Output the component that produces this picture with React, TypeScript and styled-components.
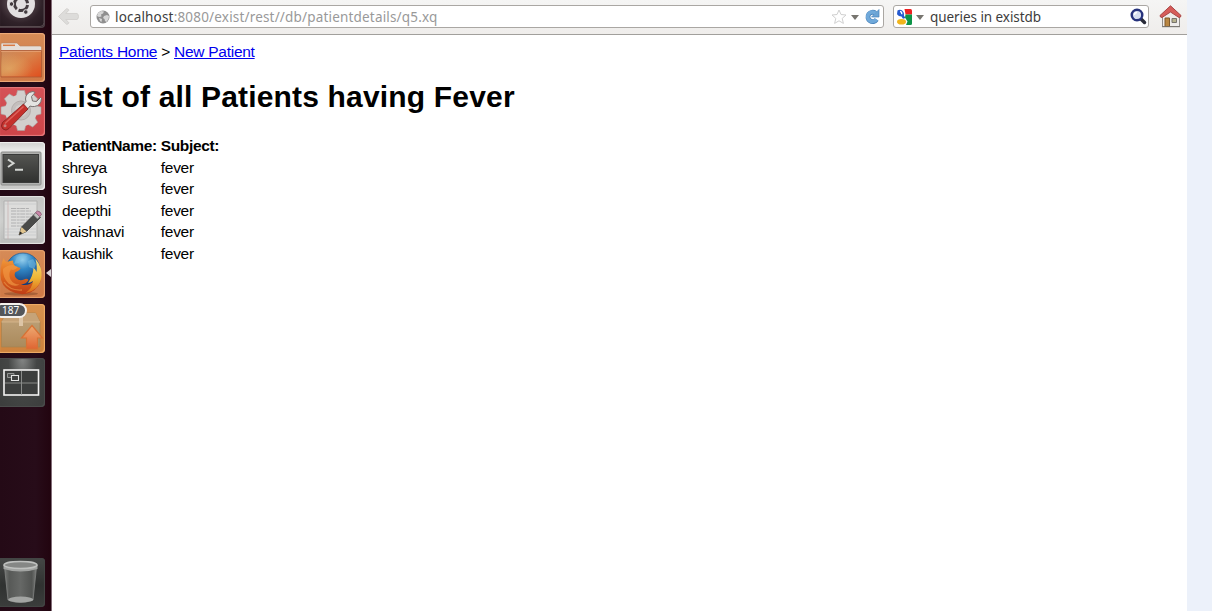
import React from "react";
import styled, { createGlobalStyle } from "styled-components";

const GlobalStyle = createGlobalStyle`
  * { box-sizing: border-box; }
  body { margin: 0; background: #fff; overflow: hidden; }
`;

const Desktop = styled.div`
  display: flex;
  width: 1212px;
  height: 611px;
  overflow: hidden;
  background: #ecf1fa;
  font-family: "Liberation Sans", Arial, sans-serif;
`;

const Launcher = styled.nav`
  display: flex;
  flex-direction: column;
  justify-content: space-between;
  width: 52px;
  height: 611px;
  padding-bottom: 4.5px;
  background: linear-gradient(90deg, #240a16, #270c19 70%, #22040f);
  border-right: 1px solid #826d78;
`;

const TileStack = styled.div`
  display: flex;
  flex-direction: column;
  gap: 5.7px;
  margin-top: -21px;
`;

const Tile = styled.div<{ $fill: string; $edge: string }>`
  position: relative;
  flex: none;
  width: 45px;
  height: 48.5px;
  background: ${(p) => p.$fill};
  border-radius: 0 4px 4px 0;
  box-shadow: inset -1px -1px 1px ${(p) => p.$edge}, inset 0 1px 1px ${(p) => p.$edge};

  > svg { display: block; width: 45px; height: 48.5px; }
`;

const ActiveMark = styled.i`
  position: absolute;
  right: -6px;
  top: 19px;
  border: solid transparent;
  border-width: 4.5px 5px 4.5px 0;
  border-right-color: #d9d2d5;
`;

const Badge = styled.span`
  position: absolute;
  left: -6px;
  top: -1px;
  width: 33px;
  height: 15px;
  padding-left: 6px;
  border: 2px solid #f4f1ed;
  border-radius: 8px;
  background: #53565a;
  color: #fff;
  font: 10px/11px "Noto Sans", sans-serif;
`;

const Browser = styled.main`
  display: flex;
  flex-direction: column;
  width: 1135px;
  background: #fff;
`;

const Toolbar = styled.header`
  display: flex;
  align-items: flex-start;
  height: 35px;
  padding: 5px 0 0 5px;
  background: linear-gradient(#f5f5f4, #efedeb);
  border-bottom: 1px solid #a19f9c;

  svg { display: block; flex: none; }
`;

const BackButton = styled.div`
  width: 33px;
  padding-top: 2px;
`;

const Field = styled.div<{ $width: number; $pad: string; $gap?: number }>`
  display: flex;
  align-items: center;
  width: ${(p) => p.$width}px;
  height: 23px;
  margin-left: ${(p) => p.$gap ?? 0}px;
  padding: ${(p) => p.$pad};
  background: #fff;
  border: 1px solid #aaa7a3;
  border-radius: 3px;
`;

const FieldText = styled.span<{ $spacing: number; $inset?: number }>`
  flex: 1;
  margin-left: ${(p) => p.$inset ?? 0}px;
  font: 13.5px/20px "Noto Sans", "Open Sans", sans-serif;
  letter-spacing: ${(p) => p.$spacing}px;
  color: #3c3c3c;
  white-space: nowrap;
`;

const Path = styled.span`
  color: #999;
`;

const Caret = styled.i<{ $gap: string }>`
  margin: ${(p) => p.$gap};
  border: solid transparent;
  border-width: 5px 4px 0;
  border-top-color: #77756f;
`;

const HomeButton = styled.div`
  margin-left: 10px;
`;

const Page = styled.article`
  padding: 8px 7px;
  font-size: 15.5px;
  letter-spacing: -0.27px;
  color: #000;
`;

const Crumbs = styled.div`
  line-height: 17px;
  height: 17px;
`;

const Link = styled.a`
  color: #0000ee;
  text-decoration: underline;
`;

const Title = styled.h1`
  margin: 20px 0;
  font-size: 30px;
  line-height: 34px;
  letter-spacing: 0.17px;
  white-space: nowrap;
`;

const Table = styled.table`
  border-spacing: 2px;
  font-size: 15.5px;
  line-height: 17.5px;

  th, td { padding: 1px; text-align: left; white-space: nowrap; }
  th { letter-spacing: -0.36px; }
`;

const patients = ["shreya", "suresh", "deepthi", "vaishnavi", "kaushik"];

const DashIcon = () => (
  <svg viewBox="0 0 45 48.5">
    <rect x="-4" y="0" width="48" height="47.5" rx="4" fill="none" stroke="#57494e" strokeWidth="1" />
    <circle cx="21" cy="25" r="14" fill="#e2dfe0" />
    <circle cx="21" cy="25" r="6.6" fill="none" stroke="#433b3f" strokeWidth="3" strokeDasharray="11.8 2" strokeDashoffset="-1" />
    <circle cx="11.5" cy="25" r="2.3" fill="#433b3f" stroke="#e2dfe0" />
    <circle cx="25.8" cy="33" r="2.3" fill="#433b3f" stroke="#e2dfe0" />
    <circle cx="25.8" cy="17" r="2.3" fill="#433b3f" stroke="#e2dfe0" />
  </svg>
);

const FolderIcon = () => (
  <svg viewBox="0 0 45 48.5">
    <defs>
      <linearGradient id="folder" x1="0" y1="0" x2="1" y2="1">
        <stop offset="0" stopColor="#cb8b5c" /><stop offset=".45" stopColor="#d9824a" /><stop offset="1" stopColor="#e04e1d" />
      </linearGradient>
      <radialGradient id="folderGlow" cx=".2" cy=".7" r=".6">
        <stop offset="0" stopColor="#e2b56d" stopOpacity=".6" /><stop offset="1" stopColor="#e2b56d" stopOpacity="0" />
      </radialGradient>
    </defs>
    <path d="M1 17V11q0-1 1-1h15l3 3h20q1.500 0 1.500 1.500V18H1z" fill="#e5ded8" stroke="#bb815a" strokeWidth=".6" />
    <path d="M3 12.300h12" fill="none" stroke="#d97943" strokeWidth="1.500" />
    <path d="M1 17.500h40.500V44H1z" fill="url(#folder)" stroke="#ad5933" strokeWidth=".8" />
    <path d="M1 18h40v25H1z" fill="url(#folderGlow)" />
    <path d="M1 18.500h40" stroke="#e9a77b" strokeWidth=".7" />
  </svg>
);

const SettingsIcon = () => {
  const teeth = [0, 45, 90, 135, 180, 225, 270, 315];
  return (
    <svg viewBox="0 0 45 48.5">
      <g transform="translate(21 23.500)">
        {teeth.map((angle) => (
          <path key={angle} d="M-5-14L-3.500-20H3.500L5-14z" fill="#d2cfcd" stroke="#aaa19f" strokeWidth=".6" transform={`rotate(${angle})`} />
        ))}
        <circle r="16" fill="#d2cfcd" />
        <circle r="9.500" fill="#c4bfbd" stroke="#b5aeac" />
        <circle r="6" fill="#d2cdcb" />
      </g>
      <path d="M25.500 12q0-6.500 7.500-7.500l2 1-3.500 4 1 4.500 4 .5 4-4 1 1q-.5 7-7 8-2.500.4-4.500-.5L26 24l-4-5 4-4.500z" fill="#e4e4e2" stroke="#777271" strokeWidth="1" />
      <path d="M23.500 17L2.500 35.500q-2.500 4 .5 6.500 3 2.500 6-.5L28 22z" fill="#c5302c" stroke="#801f1e" strokeWidth=".8" />
      <path d="M23.500 19.500L5 36.500" stroke="#dc625b" strokeWidth="1.500" />
      <circle cx="5" cy="38.700" r="1.500" fill="#c9817c" />
    </svg>
  );
};

const TerminalIcon = () => (
  <svg viewBox="0 0 45 48.5">
    <defs>
      <linearGradient id="screen" x1="0" y1="0" x2="0" y2="1">
        <stop offset="0" stopColor="#545552" /><stop offset="1" stopColor="#30312f" />
      </linearGradient>
    </defs>
    <rect x="1" y="10" width="40" height="33" rx="1" fill="#b0b1af" stroke="#8b8c8a" />
    <rect x="3" y="12.500" width="35.500" height="28" fill="url(#screen)" stroke="#3a3b3a" />
    <path d="M8 17.500l5.500 3.700L8 25M15 27.800h8" fill="none" stroke="#d4d6d3" strokeWidth="2" />
  </svg>
);

const EditorIcon = () => (
  <svg viewBox="0 0 45 48.5">
    <path d="M4 5h33v38H4z" fill="#dddddc" stroke="#b1b1b0" />
    <path d="M8 5v38" stroke="#c4acac" strokeWidth=".7" />
    <path d="M5 8h31M5 33h31M5 36h31M5 39h31" stroke="#bfc2c8" strokeWidth=".6" />
    <path d="M11 12.500h18M11 15h20M11 18h22M11 21h20M11 24h18M11 27h14M11 30h11" stroke="#b0b0b1" strokeWidth="1" strokeDasharray="5 .7 3 .5" />
    <path d="M19 39l2.500-8 14-14 5 4.500-14 14z" fill="#494a49" stroke="#303130" strokeWidth=".7" />
    <path d="M19 39l2.500-8 5 4.500z" fill="#e0c48e" />
    <path d="M19 39l1.200-3.500 2.200 1.800z" fill="#242424" />
    <path d="M33.500 19l2.500-2.500 4 4-2.500 2.500z" fill="#bfc0be" stroke="#777" strokeWidth=".5" />
    <path d="M35.500 16.500l2-1.500q3 .2 4 3.500l-1.800 2z" fill="#c986a8" stroke="#805169" strokeWidth=".7" />
  </svg>
);

const FirefoxIcon = () => (
  <svg viewBox="0 0 45 48.5">
    <defs>
      <radialGradient id="globe" cx=".48" cy=".18" r=".75">
        <stop offset="0" stopColor="#9bd3ef" /><stop offset=".4" stopColor="#3388c6" /><stop offset="1" stopColor="#123a77" />
      </radialGradient>
      <linearGradient id="fox" x1="0" y1="0" x2="0" y2="1">
        <stop offset="0" stopColor="#f09a3c" /><stop offset=".45" stopColor="#e06c20" /><stop offset="1" stopColor="#be3d16" />
      </linearGradient>
      <linearGradient id="tail" x1="0" y1="0" x2="0" y2="1">
        <stop offset="0" stopColor="#f3dc80" /><stop offset=".55" stopColor="#efb635" /><stop offset="1" stopColor="#db6a1d" />
      </linearGradient>
    </defs>
    <ellipse cx="21" cy="43.800" rx="17" ry="1.700" fill="#774123" opacity=".45" />
    <circle cx="23" cy="20" r="17" fill="url(#globe)" stroke="#28588a" strokeWidth=".7" />
    <path d="M17 7q6-3 10-1l-2 3-5 1-1 3-5 1zM28 11l5-2 3 5-2 5-5-2z" fill="#7dbfe0" opacity=".5" />
    <path d="M2 12l2-4q0 3 3 4 3-1.500 6-1.500 0 4 3 6l4.500 1.500q-.5 2.500-5 4-2 3 .5 6 3.500 3.500 8 1.500 3-1.500 4.500.5-2 4-7.500 4.500 8 2 13-4 3.500-5 4.500-10l3 6q-1 11-11 16-10 4-20-1.500Q.5 36 .5 25q-.5-7 1.500-13z" fill="url(#fox)" />
    <path d="M35.500 9q7 8 6 18-2 13-16 16 7-5 7.500-12-3 2-5 2 5-7 5.500-15 2 1 3 4 1-5-1-13z" fill="url(#tail)" />
    <path d="M3 19q4-4 10-4l5 2q-3 4-7 2.500-3 4-.5 10 3 5 9 5-5 3-11-1-6-6-5.500-14.500z" fill="#f19a45" opacity=".65" />
    <path d="M4 32q6 9 18 8" fill="none" stroke="#f1a252" strokeWidth="1.300" opacity=".55" />
  </svg>
);

const UpdatesIcon = () => (
  <svg viewBox="0 0 45 48.5">
    <defs>
      <linearGradient id="arrow" x1="0" y1="0" x2="0" y2="1">
        <stop offset="0" stopColor="#eeaa72" /><stop offset="1" stopColor="#df6532" />
      </linearGradient>
      <linearGradient id="box" x1="0" y1="0" x2="0" y2="1">
        <stop offset="0" stopColor="#c0a47c" /><stop offset="1" stopColor="#aa8a5c" />
      </linearGradient>
    </defs>
    <path d="M1.500 18l5-9h29l4.500 9v25h-38.500z" fill="url(#box)" stroke="#a8834f" strokeWidth=".7" />
    <path d="M1.500 18l5-9h29l4.500 9z" fill="#c6a378" />
    <path d="M1.500 18h38.500" stroke="#d9ba90" strokeWidth=".8" />
    <path d="M19 9h4v13h-4z" fill="#ddc5a6" />
    <path d="M32 21.500L42.500 34h-5v11h-11V34h-5z" fill="url(#arrow)" stroke="#d77235" strokeWidth="1.200" />
  </svg>
);

const WorkspaceIcon = () => (
  <svg viewBox="0 0 45 48.5">
    <rect x="4" y="12" width="34.500" height="25" fill="#3c3e3d" stroke="#f3f3f2" strokeWidth="1.600" />
    <path d="M21.500 13v23.500M5 25h33" stroke="#898b89" strokeWidth="1" />
    <path d="M7.500 15.500h6.500v4H7.500z" fill="#4e504f" stroke="#929492" />
    <path d="M11.500 17.500h7v5h-7z" fill="#3e403f" stroke="#e3e4e3" strokeWidth="1.100" />
  </svg>
);

const TrashIcon = () => (
  <svg viewBox="0 0 45 48.5">
    <defs>
      <linearGradient id="can" x1="0" y1="0" x2="1" y2="0">
        <stop offset="0" stopColor="#767876" /><stop offset=".15" stopColor="#575957" /><stop offset=".5" stopColor="#666866" /><stop offset=".85" stopColor="#525452" /><stop offset="1" stopColor="#7b7d7b" />
      </linearGradient>
    </defs>
    <path d="M4.500 9L8 42q12 5 25 0l3.500-33z" fill="url(#can)" stroke="#818381" strokeWidth=".8" />
    <ellipse cx="20.700" cy="41.500" rx="12.500" ry="3" fill="#a3a5a3" />
    <path d="M3.500 7v4q17 5 34 0V7z" fill="#a2a4a2" />
    <ellipse cx="20.500" cy="7" rx="16.500" ry="3.500" fill="#858785" stroke="#bfc1bf" strokeWidth="1.500" />
  </svg>
);

const BackIcon = () => (
  <svg width="22" height="19" viewBox="0 0 22 19">
    <path d="M9.500 1.700L1.500 9.500l8 7.800q1.500.3 2.400-1.500l-3-3.300H20q1.500-.5 1.500-3t-1.500-3H8.900l3-3.300Q11 1.400 9.500 1.700z" fill="#dddcda" stroke="#cfcdca" strokeWidth=".8" strokeLinejoin="round" />
  </svg>
);

const GlobeIcon = () => (
  <svg width="14" height="14" viewBox="0 0 14 14">
    <circle cx="7" cy="7" r="6.500" fill="#8f8f8f" />
    <path d="M2 3l3-2 3 .5-1 2-2 1 .5 2L3 7 1 6zM8 6l3-1 2 1-.5 3-2 3-1.500-1-.5-2L7 8zM3 8l3 1-.5 3L4 11z" fill="#d7d7d7" />
  </svg>
);

const StarIcon = () => (
  <svg width="16" height="16" viewBox="0 0 16 16">
    <path d="M8 1l2 4.500 5 .5-3.800 3.400 1.200 5L8 11.800l-4.400 2.600 1.200-5L1 6l5-.5z" fill="#fff" stroke="#d0d0d0" strokeLinejoin="round" />
  </svg>
);

const ReloadIcon = () => (
  <svg width="16" height="16" viewBox="0 0 16 16">
    <path d="M11.500 4.200A4.700 4.700 0 1 0 12.600 10.500" fill="none" stroke="#4a84bb" strokeWidth="4.800" />
    <path d="M15 .5V8H7.500z" fill="#6ba4d5" stroke="#4a84bb" strokeWidth=".7" />
    <path d="M11.500 4.200A4.700 4.700 0 1 0 12.400 10.200" fill="none" stroke="#70a9da" strokeWidth="3.600" />
  </svg>
);

const GoogleIcon = () => (
  <svg width="16" height="16" viewBox="0 0 16 16">
    <path d="M8.500 0h6q1.500 0 1.500 1.500V5.500H9.500z" fill="#ed2020" />
    <path d="M9.500 5.500H16v9q0 1.500-1.500 1.500H10l1.500-3.500-2.500-4z" fill="#0c9447" />
    <path d="M1.500 1.500Q4 0 6.500 1.800q2 2 1.500 5L9.500 9 7 9.800 5.500 7.500Q2.500 7.500 1 5.200z" fill="#2459cf" />
    <ellipse cx="5.500" cy="12.800" rx="4.500" ry="2.800" fill="#f1b51c" />
    <path d="M4 2.300q2 .3 1.800 3" fill="none" stroke="#fff" strokeWidth="1.300" />
  </svg>
);

const SearchIcon = () => (
  <svg width="17" height="17" viewBox="0 0 17 17">
    <path d="M10.500 10.500l4 4" stroke="#292b38" strokeWidth="3.500" strokeLinecap="round" />
    <circle cx="7" cy="7" r="5.300" fill="#d6def0" stroke="#26327c" strokeWidth="2.400" />
    <path d="M4.500 7q0-2.500 2.500-2.500" fill="none" stroke="#fff" strokeWidth="1.300" />
  </svg>
);

const HomeIcon = () => (
  <svg width="23" height="23" viewBox="0 0 23 23">
    <path d="M3.500 10v11.500h17V10L12 4z" fill="#eeecea" stroke="#928e8a" />
    <path d="M6 13h4.500v8.500H6z" fill="#b88642" stroke="#805928" />
    <path d="M13 13.500h4.500v4H13z" fill="#b7b28d" stroke="#77736d" />
    <path d="M11.500.8L1 10.500q0 2 2 2L11.500 7l8.500 5.500q2 0 2-2z" fill="#d65c59" stroke="#a84746" strokeLinejoin="round" />
    <path d="M3 21.700h18" stroke="#77736e" />
  </svg>
);

const orange = "linear-gradient(#d68b57, #cf7946)";

export default function App() {
  return (
    <>
      <GlobalStyle />
      <Desktop>
        <Launcher>
          <TileStack>
            <Tile $fill="radial-gradient(circle at 45% 45%, #77686d, #302229 60%, #21151b)" $edge="#514349"><DashIcon /></Tile>
            <Tile $fill={orange} $edge="#efac7d"><FolderIcon /></Tile>
            <Tile $fill="linear-gradient(#d55257, #cc4449)" $edge="#e77c7e"><SettingsIcon /></Tile>
            <Tile $fill="linear-gradient(#cfcfce, #eeeeed 20%, #c5c6c4)" $edge="#f1f1f0"><TerminalIcon /></Tile>
            <Tile $fill="linear-gradient(#c4c4c3, #cecfcd 50%, #bcbdbb)" $edge="#e6e6e5"><EditorIcon /></Tile>
            <Tile $fill={orange} $edge="#e7a36f"><FirefoxIcon /><ActiveMark /></Tile>
            <Tile $fill="linear-gradient(#d7924f, #cd813c)" $edge="#f0ae69"><UpdatesIcon /><Badge>187</Badge></Tile>
            <Tile $fill="radial-gradient(ellipse at 50% 0%, #858786, #444645 45%, #3b3d3c)" $edge="#4c4e4d"><WorkspaceIcon /></Tile>
          </TileStack>
          <Tile $fill="linear-gradient(#454746, #303231 55%, #3b3d3c)" $edge="#434544"><TrashIcon /></Tile>
        </Launcher>
        <Browser>
          <Toolbar>
            <BackButton><BackIcon /></BackButton>
            <Field $width={794} $pad="0 3px 0 5px">
              <GlobeIcon />
              <FieldText $spacing={0.18} $inset={5}>localhost<Path>:8080/exist/rest//db/patientdetails/q5.xq</Path></FieldText>
              <StarIcon />
              <Caret $gap="2px 5px 0 4px" />
              <ReloadIcon />
            </Field>
            <Field $width={256} $pad="0 1px 0 2px" $gap={9}>
              <GoogleIcon />
              <Caret $gap="2px 6px 0 4px" />
              <FieldText $spacing={-0.06}>queries in existdb</FieldText>
              <SearchIcon />
            </Field>
            <HomeButton><HomeIcon /></HomeButton>
          </Toolbar>
          <Page>
            <Crumbs><Link>Patients Home</Link> &gt; <Link>New Patient</Link></Crumbs>
            <Title>List of all Patients having Fever</Title>
            <Table>
              <thead><tr><th>PatientName:</th><th>Subject:</th></tr></thead>
              <tbody>
                {patients.map((name) => (
                  <tr key={name}><td>{name}</td><td>fever</td></tr>
                ))}
              </tbody>
            </Table>
          </Page>
        </Browser>
      </Desktop>
    </>
  );
}
